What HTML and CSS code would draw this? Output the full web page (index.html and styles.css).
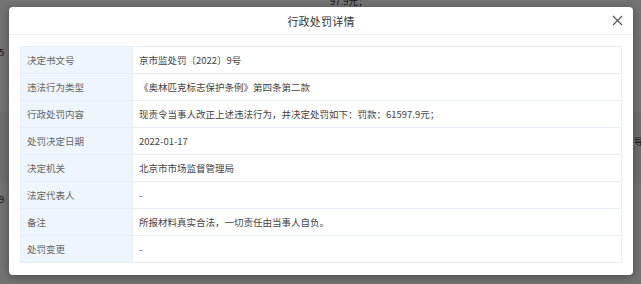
FILE: index.html
```html
<!DOCTYPE html>
<html lang="zh-CN">
<head>
<meta charset="utf-8">
<title>行政处罚详情</title>
<link rel="stylesheet" href="styles.css">
</head>
<body>
<div class="page">
  <div class="bg-top">97.9元；</div>
  <div class="bg-band"></div>
  <div class="bg-left bg-left-5">5</div>
  <div class="bg-left bg-left-9">9</div>
  <div class="bg-right">导</div>
</div>
<div class="mask"></div>
<div class="modal">
  <div class="modal-header">
    <span class="modal-title">行政处罚详情</span>
    <button class="modal-close" aria-label="关闭">
      <svg width="11" height="11" viewBox="0 0 11 11"><path d="M1 1 L10 10 M10 1 L1 10" stroke="#555" stroke-width="1.2" fill="none"/></svg>
    </button>
  </div>
  <div class="modal-body">
    <table class="detail">
      <tr><th>决定书文号</th><td>京市监处罚〔2022〕9号</td></tr>
      <tr><th>违法行为类型</th><td>《奥林匹克标志保护条例》第四条第二款</td></tr>
      <tr><th>行政处罚内容</th><td>现责令当事人改正上述违法行为，并决定处罚如下：罚款：61597.9元；</td></tr>
      <tr><th>处罚决定日期</th><td>2022-01-17</td></tr>
      <tr><th>决定机关</th><td>北京市市场监督管理局</td></tr>
      <tr><th>法定代表人</th><td>-</td></tr>
      <tr><th>备注</th><td>所报材料真实合法，一切责任由当事人自负。</td></tr>
      <tr><th>处罚变更</th><td>-</td></tr>
    </table>
  </div>
</div>
</body>
</html>
```

FILE: styles.css
```css
html, body {
  margin: 0;
  padding: 0;
  width: 641px;
  height: 284px;
  overflow: hidden;
  font-family: "PingFang SC", "Noto Sans CJK SC", "Noto Sans", sans-serif;
}
.page {
  position: relative;
  width: 641px;
  height: 284px;
  background: #ffffff;
  color: #333;
  font-size: 9.5px;
}
.bg-top {
  position: absolute;
  left: 330px;
  top: -6px;
}
.bg-band {
  position: absolute;
  left: 0;
  right: 0;
  top: 112px;
  height: 71px;
  background: #f3f3f3;
}
.bg-left {
  position: absolute;
  left: -1px;
}
.bg-left-5 { top: 45px; }
.bg-left-9 { top: 192px; }
.bg-right {
  position: absolute;
  left: 634px;
  top: 134px;
}
.mask {
  position: absolute;
  inset: 0;
  background: rgba(0, 0, 0, 0.55);
}
.modal {
  position: absolute;
  left: 9px;
  top: 7px;
  width: 624px;
  height: 268px;
  background: #fff;
  border-radius: 4px;
  box-shadow: 0 2px 8px rgba(0, 0, 0, 0.35);
  display: flex;
  flex-direction: column;
  box-sizing: border-box;
}
.modal-header {
  position: relative;
  height: 27px;
  border-bottom: 1px solid #f0f0f0;
  display: flex;
  align-items: center;
  justify-content: center;
}
.modal-title {
  font-size: 11px;
  color: #333;
  letter-spacing: 0.2px;
}
.modal-close {
  position: absolute;
  right: 10px;
  top: 8px;
  width: 11px;
  height: 11px;
  padding: 0;
  border: 0;
  background: transparent;
  display: flex;
}
.modal-body {
  padding: 11px;
}
.detail {
  width: 602px;
  border-collapse: collapse;
  table-layout: fixed;
  font-size: 9.5px;
}
.detail th,
.detail td {
  height: 26px;
  border: 1px solid #e6eef7;
  padding: 0 0 0 6px;
  text-align: left;
  font-weight: normal;
  white-space: nowrap;
}
.detail th {
  width: 105px;
  background: #eef5fc;
  color: #666;
}
.detail td {
  color: #444;
  background: #fff;
}
```
